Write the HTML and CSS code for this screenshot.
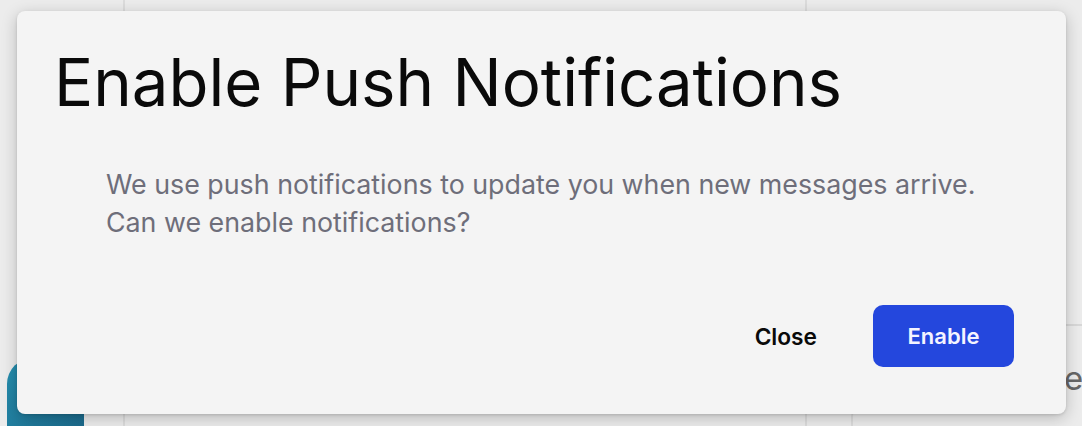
FILE: index.html
```html
<!DOCTYPE html>
<html>
<head>
<meta charset="utf-8">
<link rel="stylesheet" href="styles.css">
</head>
<body>
<div class="backdrop">
  <div class="bg-col bg-left"></div>
  <div class="bg-col bg-mid"></div>
  <div class="bg-col bg-right">
    <div class="bg-rule"></div>
    <div class="bg-text">e</div>
    <div class="bg-card"></div>
  </div>
  <div class="bg-fab"></div>
</div>
<div class="modal">
  <h1 class="modal-title">Enable Push Notifications</h1>
  <p class="modal-body">We use push notifications to update you when new messages arrive.<br>Can we enable notifications?</p>
  <div class="modal-actions">
    <button class="btn btn-close">Close</button>
    <button class="btn btn-enable">Enable</button>
  </div>
</div>
</body>
</html>
```
FILE: styles.css
```css
html, body {
  margin: 0;
  padding: 0;
  width: 1082px;
  height: 426px;
  overflow: hidden;
  background: #ececec;
  font-family: Inter, "Noto Sans", sans-serif;
}
.backdrop {
  position: absolute;
  inset: 0;
  display: flex;
  overflow: hidden;
}
.bg-col {
  height: 100%;
}
.bg-left {
  width: 123px;
  border-right: 2px solid #dcdcdc;
}
.bg-mid {
  width: 680px;
  border-right: 2px solid #dcdcdc;
}
.bg-right {
  flex: 1;
  position: relative;
  overflow: hidden;
}
.bg-rule {
  position: absolute;
  left: 0;
  right: 0;
  top: 324px;
  height: 2px;
  background: #d8d8d8;
}
.bg-text {
  position: absolute;
  left: 257px;
  top: 358px;
  font-size: 33px;
  line-height: 40px;
  color: #666;
}
.bg-card {
  position: absolute;
  left: 44px;
  top: 410px;
  width: 300px;
  height: 40px;
  border-left: 2px solid #dcdcdc;
  border-top-left-radius: 6px;
}
.bg-fab {
  position: absolute;
  left: 7px;
  top: 358px;
  width: 77px;
  height: 68px;
  border-radius: 26px 26px 0 0;
  background: linear-gradient(135deg, #2690b0, #1b6a8c);
}
.modal {
  position: absolute;
  left: 17px;
  top: 11px;
  width: 1049px;
  height: 403px;
  box-sizing: border-box;
  background: #f4f4f4;
  border-radius: 8px;
  box-shadow: 0 4px 16px rgba(0, 0, 0, 0.22), 0 1px 3px rgba(0, 0, 0, 0.12);
  padding: 34px 37px 0 37px;
  display: flex;
  flex-direction: column;
}
.modal-title {
  margin: 0;
  font-size: 65.3px;
  font-weight: 400;
  line-height: 76px;
  color: #0a0a0a;
  letter-spacing: 0;
}
.modal-body {
  margin: 44px 0 0 52px;
  font-size: 26.8px;
  line-height: 38px;
  color: #6e6e7a;
}
.modal-actions {
  margin-top: auto;
  margin-bottom: 47px;
  display: flex;
  justify-content: flex-end;
  align-items: center;
  gap: 56px;
  padding-right: 15px;
}
.btn {
  font-family: Inter, "Noto Sans", sans-serif;
  font-size: 22px;
  font-weight: 600;
  border: none;
  cursor: pointer;
}
.btn-close {
  background: transparent;
  color: #0a0a0a;
  padding: 0;
  font-size: 22.7px;
}
.btn-enable {
  width: 141px;
  height: 62px;
  border-radius: 10px;
  background: #2447dd;
  color: #f4f4ff;
}
```
